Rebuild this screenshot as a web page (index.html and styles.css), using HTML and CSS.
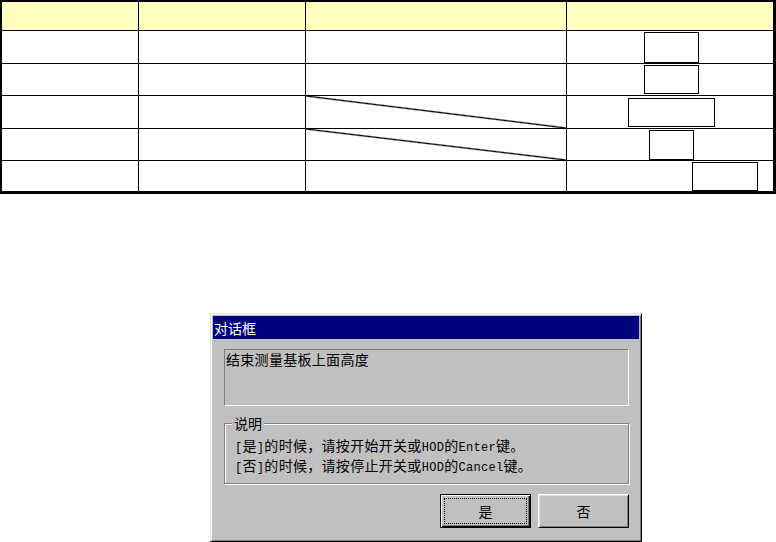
FILE: index.html
```html
<!DOCTYPE html>
<html>
<head>
    <meta charset="utf-8" />
    <title>对话框</title>
    <link rel="stylesheet" href="styles.css">
</head>
<body>
    <table class="grid">
        <tr class="head">
            <td class="c1"></td>
            <td class="c2"></td>
            <td class="c3"></td>
            <td class="c4"></td>
        </tr>
        <tr class="r1">
            <td></td>
            <td></td>
            <td></td>
            <td><div class="box box-a"></div></td>
        </tr>
        <tr class="r2">
            <td></td>
            <td></td>
            <td></td>
            <td><div class="box box-b"></div></td>
        </tr>
        <tr class="r3">
            <td></td>
            <td></td>
            <td class="cross"></td>
            <td><div class="box box-c"></div></td>
        </tr>
        <tr class="r4">
            <td></td>
            <td></td>
            <td class="cross"></td>
            <td><div class="box box-d"></div></td>
        </tr>
        <tr class="r5">
            <td></td>
            <td></td>
            <td></td>
            <td><div class="box box-e"></div></td>
        </tr>
    </table>

    <div class="dialog">
        <div class="title">对话框</div>
        <div class="content">
            <div class="message">结束测量基板上面高度</div>
            <fieldset class="group">
                <legend>说明</legend>
                <p><span class="lat">[</span>是<span class="lat">]</span>的时候，请按开始开关或<span class="lat">HOD</span>的<span class="lat">Enter</span>键。</p>
                <p><span class="lat">[</span>否<span class="lat">]</span>的时候，请按停止开关或<span class="lat">HOD</span>的<span class="lat">Cancel</span>键。</p>
            </fieldset>
            <div class="buttons">
                <button class="btn default">是</button>
                <button class="btn">否</button>
            </div>
        </div>
    </div>
</body>
</html>
```

FILE: styles.css
```css
* {
    box-sizing: border-box;
}

html {
    padding: 0px;
    margin: 0px;
}

body {
    background-color: #fff;
    padding: 0px;
    margin: 0px;
    font-family: "Noto Sans CJK SC", sans-serif;
}

/* table */
.grid {
    border-collapse: separate;
    border-spacing: 1px;
    background-color: #000;
    border: 1px solid #000;
    border-right-width: 2px;
    border-bottom-width: 2px;
}
.grid td {
    padding: 0px;
    background-color: #fff;
    vertical-align: top;
}
.grid .c1 { width: 136px; }
.grid .c2 { width: 166px; }
.grid .c3 { width: 260px; }
.grid .c4 { width: 206px; }

.head td {
    height: 28px;
    background-color: #ffffc0;
}
.r1 td, .r3 td { height: 32px; }
.r2 td, .r4 td { height: 31px; }
.r5 td { height: 30px; }

.r1 td, .r2 td, .r3 td, .r4 td, .r5 td {
    padding-top: 1px;
}

.grid td.cross {
    background: linear-gradient(to top right, #fff calc(50% - 1.3px), #000 50%, #fff calc(50% + 1.3px));
}

.box {
    border: 1px solid #000;
    background-color: #fff;
}
.box-a { margin-left: 77px; width: 55px; height: 31px; }
.box-b { margin-left: 77px; width: 55px; height: 29px; }
.box-c { margin: 1px 0 0 61px; width: 87px; height: 29px; }
.box-d { margin-left: 82px; width: 45px; height: 30px; }
.box-e { margin-left: 125px; width: 66px; height: 29px; }

/* dialog */
.dialog {
    margin: 119px 0 0 210px;
    width: 432px;
    height: 229px;
    padding: 2px;
    background-color: #c0c0c0;
    border: 1px solid;
    border-color: #dfdfdf #000 #000 #dfdfdf;
    box-shadow: inset 1px 1px #fff, inset -1px -1px #808080;
    font-size: 14px;
    line-height: 18px;
    color: #000;
}
.title {
    height: 23px;
    padding: 3px 0 0 1px;
    background-color: #000080;
    color: #fff;
}
.content {
    padding: 10px 10px 0 11px;
}
.message {
    height: 57px;
    padding-left: 1px;
    border: 1px solid;
    border-color: #808080 #fff #fff #808080;
    letter-spacing: 0.3px;
}
.group {
    margin: 8px 0 0 0;
    padding: 3px 10px 8px 10px;
    min-width: 0;
    border: 1px solid #808080;
    box-shadow: inset 1px 1px #fff, 1px 1px #fff;
}
.group legend {
    margin-left: -3px;
    padding: 0 2px;
    background-color: #c0c0c0;
}
.group p {
    margin: 0px;
    height: 20px;
    line-height: 20px;
    white-space: nowrap;
    letter-spacing: 0.3px;
}
.lat {
    font-family: "Liberation Mono", monospace;
    font-size: 12px;
    line-height: 12px;
}

.buttons {
    display: flex;
    justify-content: flex-end;
    gap: 7px;
    margin-top: 10px;
}
.btn {
    width: 91px;
    height: 34px;
    padding: 0px;
    font-family: "Noto Sans CJK SC", sans-serif;
    font-size: 14px;
    color: #000;
    background-color: #c0c0c0;
    border: 1px solid;
    border-color: #fff #000 #000 #fff;
    box-shadow: inset 1px 1px #dfdfdf, inset -1px -1px #808080;
}
.btn.default {
    border-color: #000;
    box-shadow: inset 1px 1px #fff, inset -1px -1px #000, inset -2px -2px #808080;
    outline: 1px dotted #000;
    outline-offset: -5px;
}
```
